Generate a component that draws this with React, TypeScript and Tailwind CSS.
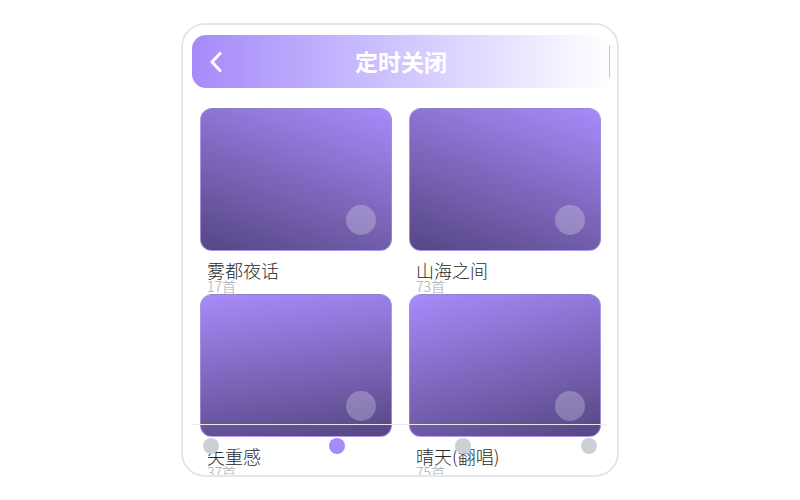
const playlists = [
  { title: '雾都夜话', count: '17首', bg: 'bg-[linear-gradient(200deg,#a78bfa,#564683)]' },
  { title: '山海之间', count: '73首', bg: 'bg-[linear-gradient(200deg,#a78bfa,#564683)]' },
  { title: '失重感', count: '37首', bg: 'bg-[linear-gradient(172deg,#a78bfa,#564683)]' },
  { title: '晴天(翻唱)', count: '75首', bg: 'bg-[linear-gradient(165deg,#a78bfa,#564683)]' },
];

const tabs = [false, true, false, false];

const App = () => {
  return (
    <div className="flex h-screen w-full items-center justify-center bg-white font-['Noto_Sans_CJK_SC','Noto_Sans',sans-serif]">
      <div className="relative h-[454px] w-[438px] overflow-hidden rounded-[24px] border-2 border-[#e6e6ea] bg-white">
        {/* header */}
        <div className="ml-[9px] mt-[10px] flex h-[53px] w-[418px] items-center rounded-[14px] bg-gradient-to-r from-[#a68af9] to-white">
          <button className="flex w-[40px] items-center pl-[18px]">
            <svg width="12" height="20" viewBox="0 0 12 20" fill="none">
              <polyline points="10,1.5 2,10 10,18.5" stroke="white" strokeWidth="3" strokeLinecap="round" strokeLinejoin="round" />
            </svg>
          </button>
          <h1 className="flex-1 text-center text-[23px] font-bold leading-none text-white">定时关闭</h1>
          <div className="flex w-[40px] justify-end">
            <div className="h-[33px] w-px bg-[#c9bcf7]" />
          </div>
        </div>

        {/* grid */}
        <div className="mt-[20px] grid grid-cols-2 gap-x-[17px] pl-[17px] pr-[16px]">
          {playlists.map((p) => (
            <div key={p.title}>
              <div className={`relative h-[143px] rounded-[12px] border border-[#b9a6f0]/60 ${p.bg}`}>
                <div className="absolute bottom-[15px] right-[15px] h-[30px] w-[30px] rounded-full bg-white/25" />
              </div>
              <div className="mt-[11px] pl-[7px]">
                <div className="text-[18px] font-light leading-[16px] text-[#2a2a2a]">{p.title}</div>
                <div className="text-[14px] font-light leading-[16px] text-[#a6aab1]">{p.count}</div>
              </div>
            </div>
          ))}
        </div>

        {/* bottom tab bar */}
        <div className="absolute left-[10px] right-[10px] top-[399px] flex justify-between border-t border-[#e8e8ec] px-[10px] pt-[13px]">
          {tabs.map((active, i) => (
            <div key={i} className={`h-4 w-4 rounded-full ${active ? 'bg-[#a78bfa]' : 'bg-[#ccd0d6]'}`} />
          ))}
        </div>
      </div>
    </div>
  );
};

export default App;
